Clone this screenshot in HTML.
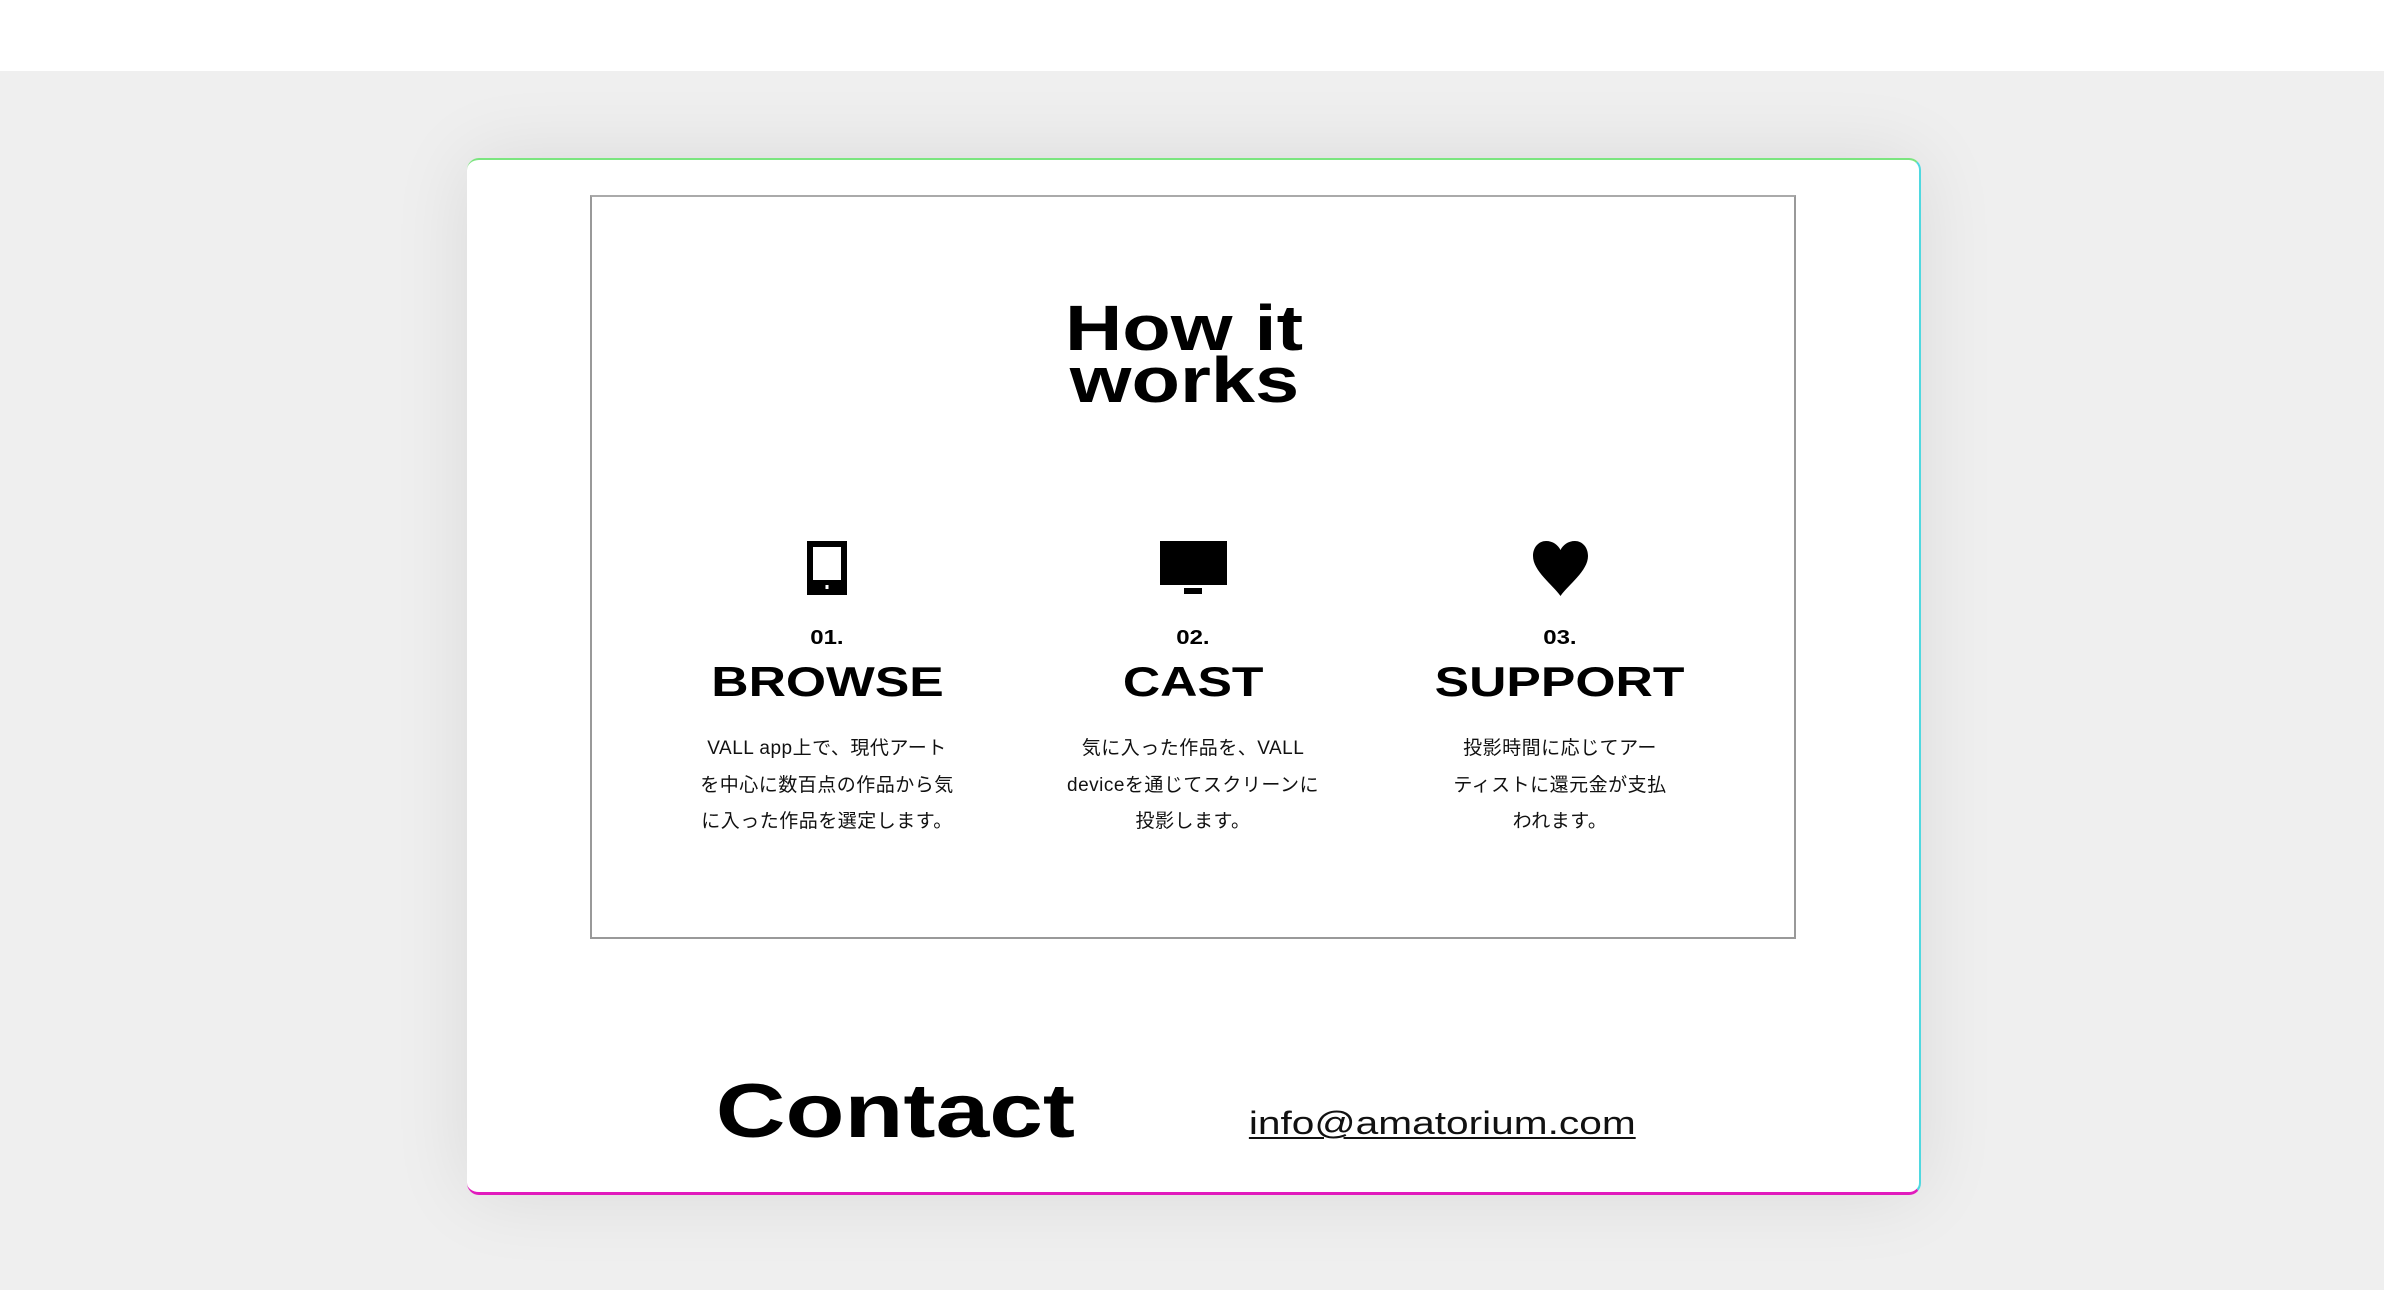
<!DOCTYPE html>
<html><head><meta charset="utf-8"><style>
*{margin:0;padding:0;box-sizing:border-box}
body{width:2384px;height:1290px;background:#efefef;position:relative;overflow:hidden;font-family:"Liberation Sans","Noto Sans CJK JP",sans-serif;color:#000}
.top{position:absolute;left:0;top:0;width:2384px;height:71px;background:#fff}
.card{position:absolute;left:467px;top:158px;width:1454px;height:1037px;background:#fff;border-radius:12px;border-top:2px solid #7be57f;border-right:2px solid #4fd8e0;border-bottom:3px solid #e11bbd;box-shadow:0 0 80px rgba(0,0,0,.09)}
.box{position:absolute;left:590px;top:195px;width:1206px;height:744px;border:2px solid #999;border-top-color:#aaa}
.c{position:absolute;text-align:center;white-space:nowrap}
.w{display:inline-block;transform-origin:center}
h1{font-size:64px;line-height:52px;font-weight:700}
.num{font-size:20px;line-height:20px;font-weight:700}
.tt{font-size:42px;line-height:42px;font-weight:700}
.d{font-size:19px;line-height:36.5px;letter-spacing:.5px;color:#111}
</style></head><body>
<div class="top"></div>
<div class="card"></div>
<div class="box"></div>
<div class="c" style="left:984px;width:400px;top:302px"><h1><span class="w" style="transform:scaleX(1.24)">How it</span><br><span class="w" style="transform:scaleX(1.24)">works</span></h1></div>

<svg style="position:absolute;left:807px;top:541px" width="40" height="54" viewBox="0 0 40 54"><rect x="0" y="0" width="40" height="54" fill="#000"/><rect x="6" y="6" width="28" height="33" fill="#fff"/><rect x="18.5" y="44" width="3" height="4" fill="#fff"/></svg>
<svg style="position:absolute;left:1160px;top:541px" width="67" height="54" viewBox="0 0 67 54"><rect x="0" y="0" width="67" height="44" fill="#000"/><rect x="24" y="47" width="18" height="6" fill="#000"/></svg>
<svg style="position:absolute;left:1531px;top:541px" width="59" height="55" viewBox="0 0 59 55"><path d="M29.5 55 C22 44 2 30 2 15 C2 6 8 0 15 0 C22 0 27 4 29.5 9 C32 4 37 0 44 0 C51 0 57 6 57 15 C57 30 37 44 29.5 55Z" fill="#000"/></svg>

<div class="c num" style="left:727px;width:200px;top:628px"><span class="w" style="transform:scaleX(1.2)">01.</span></div>
<div class="c num" style="left:1093px;width:200px;top:628px"><span class="w" style="transform:scaleX(1.2)">02.</span></div>
<div class="c num" style="left:1460px;width:200px;top:628px"><span class="w" style="transform:scaleX(1.2)">03.</span></div>

<div class="c tt" style="left:677px;width:300px;top:661px"><span class="w" style="transform:scaleX(1.23)">BROWSE</span></div>
<div class="c tt" style="left:1043px;width:300px;top:661px"><span class="w" style="transform:scaleX(1.23)">CAST</span></div>
<div class="c tt" style="left:1410px;width:300px;top:661px"><span class="w" style="transform:scaleX(1.23)">SUPPORT</span></div>

<div class="c d" style="left:677px;width:300px;top:731px">VALL app上で、現代アート<br>を中心に数百点の作品から気<br>に入った作品を選定します。</div>
<div class="c d" style="left:1043px;width:300px;top:731px">気に入った作品を、VALL<br>deviceを通じてスクリーンに<br>投影します。</div>
<div class="c d" style="left:1410px;width:300px;top:731px">投影時間に応じてアー<br>ティストに還元金が支払<br>われます。</div>

<div class="c" style="left:716px;width:359px;top:1074px;font-size:76px;line-height:76px;font-weight:700"><span class="w" style="transform:scaleX(1.27)">Contact</span></div>
<div class="c" style="left:1248px;width:388px;top:1107px;font-size:32px;line-height:32px;color:#111"><span class="w" style="transform:scaleX(1.27);text-decoration:underline;text-decoration-thickness:2px;text-underline-offset:3px">info@amatorium.com</span></div>
</body></html>
